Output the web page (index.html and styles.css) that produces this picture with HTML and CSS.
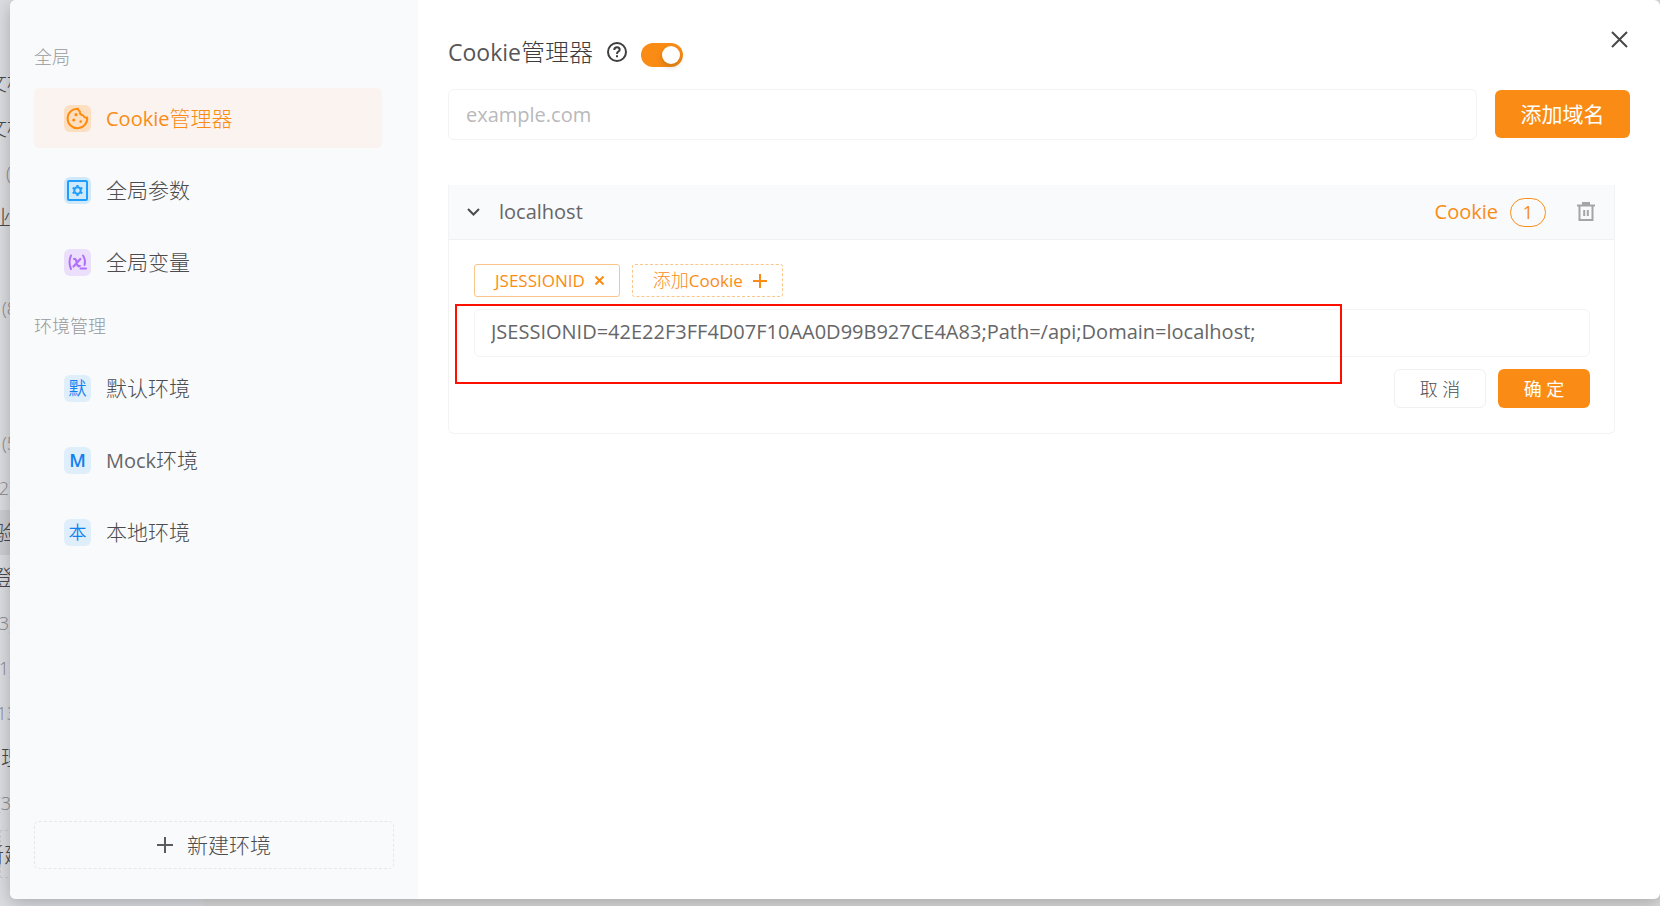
FILE: index.html
```html
<!DOCTYPE html>
<html lang="zh-CN">
<head>
<meta charset="utf-8">
<title>Cookie管理器</title>
<link rel="stylesheet" href="styles.css">
</head>
<body>
<div class="backdrop" aria-hidden="true">
  <ul class="tree">
    <li class="end-28">文档</li>
    <li class="end-28">文档</li>
    <li class="count end-26">(3)</li>
    <li class="end-32">业务</li>
    <li></li>
    <li class="count end-22">(8)</li>
    <li></li>
    <li></li>
    <li class="count end-22">(5)</li>
    <li class="count end-14">(2)</li>
    <li class="selected end-16">验</li>
    <li class="end-14">登</li>
    <li class="count end-14">(3)</li>
    <li class="count end-14">(1)</li>
    <li class="count end-22">(13)</li>
    <li class="end-22">管理</li>
    <li class="count end-16">(3)</li>
  </ul>
  <div class="tree-add end-26">新建</div>
</div>

<div class="modal" role="dialog" aria-labelledby="title">
  <aside class="sidebar">
    <h2 class="group-title">全局</h2>
    <nav class="menu">
      <a class="menu-item active" href="#cookie">
        <span class="badge badge-orange">
          <svg width="27" height="27" viewBox="0 0 27 27" fill="none" stroke="#ff8c0f" stroke-width="2">
            <path d="M14 3.7A9.8 9.8 0 1 0 23.2 12.6Q20.6 13.4 19.4 10.6Q15.2 9.6 15.9 6.4Q14 5.6 14 3.7Z" stroke-linejoin="round"/>
            <g fill="#ff8c0f" stroke="none"><circle cx="12" cy="9.7" r="1.6"/><circle cx="9.8" cy="15" r="1.6"/><circle cx="16.7" cy="16.6" r="1.3"/></g>
          </svg>
        </span>
        <span><span class="latin">Cookie</span>管理器</span>
      </a>
      <a class="menu-item" href="#params">
        <span class="badge badge-sky">
          <svg width="27" height="27" viewBox="0 0 27 27" fill="none" stroke="#1e9fff">
            <rect x="4" y="4" width="19" height="19" rx="1" stroke-width="2"/>
            <circle cx="13.5" cy="13.5" r="3.2" stroke-width="2"/>
            <path d="M13.5 8v2.4M13.5 16.600v2.400M8.700 10.700l2.100 1.200M16.200 15.100l2.100 1.200M8.700 16.300l2.100-1.200M16.200 11.900l2.100-1.200" stroke-width="2.200"/>
          </svg>
        </span>
        <span>全局参数</span>
      </a>
      <a class="menu-item" href="#vars">
        <span class="badge badge-purple">
          <svg width="27" height="27" viewBox="0 0 27 27" fill="none" stroke="#b070ff" stroke-width="2" stroke-linecap="round">
            <path d="M7 6.500Q4 13 7 20M19 6.500Q22 11 20.500 16M16.500 19.500H22"/>
            <path d="M10 10Q11.700 9.500 12.300 12L13.200 15.500Q13.800 17.800 15.800 17M16.300 10L9.500 17.500" stroke-width="2.200"/>
          </svg>
        </span>
        <span>全局变量</span>
      </a>
    </nav>
    <h2 class="group-title">环境管理</h2>
    <nav class="menu">
      <a class="menu-item" href="#default"><span class="badge badge-blue">默</span><span>默认环境</span></a>
      <a class="menu-item" href="#mock"><span class="badge badge-blue badge-bold">M</span><span><span class="latin">Mock</span>环境</span></a>
      <a class="menu-item" href="#local"><span class="badge badge-blue">本</span><span>本地环境</span></a>
    </nav>
    <button class="new-env" type="button">
      <svg width="16" height="16" viewBox="0 0 16 16" stroke="#5c5c5e" stroke-width="2"><path d="M8 0v16M0 8h16"/></svg>
      新建环境
    </button>
  </aside>

  <main class="content">
    <header class="heading">
      <h1 id="title" class="title"><span class="title-latin">Cookie</span>管理器</h1>
      <svg width="20" height="20" viewBox="0 0 20 20" fill="none" stroke="#3e3e40" stroke-width="2">
        <circle cx="10" cy="10" r="9"/>
        <path d="M7.300 8Q7.300 5.300 10 5.300T12.700 7.800Q12.700 9 11.300 9.700Q10 10.400 10 12M10 13.200v2"/>
      </svg>
      <input class="switch" type="checkbox" role="switch" aria-label="启用Cookie管理器" checked>
    </header>

    <form class="domain-form">
      <input class="field domain-field" type="text" placeholder="example.com" aria-label="域名">
      <button class="primary add-domain" type="button">添加域名</button>
    </form>

    <section class="panel">
      <header class="panel-head">
        <button class="toggle latin" type="button" aria-expanded="true">
          <svg width="13" height="8" viewBox="0 0 13 8" fill="none" stroke="#4c4c4e" stroke-width="2"><path d="M1 1l5.500 5.500L12 1"/></svg>
          localhost
        </button>
        <span class="cookie-label latin">Cookie</span>
        <span class="count-pill">1</span>
        <button class="icon-button" type="button" aria-label="删除">
          <svg width="18" height="20" viewBox="0 0 18 20" fill="none" stroke="#a4a5a7" stroke-width="2">
            <path d="M0 3.500h18M2.500 3.500V18h13V3.500M7.200 8v6M10.800 8v6"/><path d="M5 1.500h8" stroke-width="3"/>
          </svg>
        </button>
      </header>
      <div class="panel-body">
        <div class="tags">
          <button class="tag" type="button"><span class="tag-latin">JSESSIONID</span>
            <svg width="9" height="9" viewBox="0 0 9 9" stroke="#fa8c16" stroke-width="2"><path d="M0.500 0.500l8 8M8.500 0.500l-8 8"/></svg>
          </button>
          <button class="tag tag-dashed" type="button"><span>添加<span class="tag-latin">Cookie</span></span>
            <svg width="14" height="14" viewBox="0 0 14 14" stroke="#fa8c16" stroke-width="2"><path d="M7 0v14M0 7h14"/></svg>
          </button>
        </div>
        <input class="field cookie-field" type="text" aria-label="Cookie" value="JSESSIONID=42E22F3FF4D07F10AA0D99B927CE4A83;Path=/api;Domain=localhost;">
        <div class="actions">
          <button class="secondary action" type="button">取 消</button>
          <button class="primary action" type="button">确 定</button>
        </div>
      </div>
      <div class="highlight"></div>
    </section>
  </main>
  <button class="close" type="button" aria-label="关闭">
    <svg width="17" height="17" viewBox="0 0 17 17" stroke="#48484a" stroke-width="2"><path d="M1 1l15 15M16 1L1 16"/></svg>
  </button>
</div>
</body>
</html>
```
FILE: styles.css
```css
* { box-sizing: border-box; }

body {
  margin: 0;
  min-height: 100vh;
  position: relative;
  overflow: hidden;
  background: #dadada;
  color: #4c4c4e;
  font: 300 21px/30px "Open Sans", "Noto Sans CJK SC", sans-serif;
}

button, input { margin: 0; font: inherit; color: inherit; }
button { padding: 0; border: 0; background: none; cursor: pointer; white-space: nowrap; }
svg { display: block; flex: none; }
h1, h2 { margin: 0; font-weight: 300; }

.latin { color: #666668; font-size: 20px; font-weight: 400; }

/* Page behind the dialog */
.backdrop {
  position: absolute;
  inset: 0 auto 0 0;
  width: 204px;
  padding-top: 60px;
  overflow: hidden;
  background: #dcdde1;
  color: #48494c;
}
.tree { margin: 0; padding: 0; list-style: none; }
.tree li {
  display: flex;
  justify-content: flex-end;
  align-items: center;
  height: 45px;
  padding-bottom: 2px;
  white-space: nowrap;
}
.tree .count { padding-bottom: 0; color: #88898d; font-size: 18px; }
.tree .selected { background: #cdced2; }
.tree-add {
  display: flex;
  height: 48px;
  margin-top: 5px;
  align-items: center;
  justify-content: flex-end;
  border: 1px dashed #cacbcf;
  white-space: nowrap;
}
.end-14 { padding-right: 190px; }
.end-16 { padding-right: 188px; }
.end-22 { padding-right: 182px; }
.end-26 { padding-right: 178px; }
.end-28 { padding-right: 176px; }
.end-32 { padding-right: 172px; }

/* Dialog */
.modal {
  position: relative;
  display: flex;
  min-height: calc(100vh - 7px);
  margin-left: 10px;
  border-radius: 6px;
  overflow: hidden;
  background: #fff;
  box-shadow: 0 4px 18px rgba(0, 0, 0, 0.24);
}
.close { position: absolute; top: 31px; right: 32px; }

.sidebar {
  display: flex;
  flex: none;
  flex-direction: column;
  width: 408px;
  padding: 45px 24px 30px;
  background: #f9fafc;
}
.group-title {
  margin-bottom: 19px;
  color: #98999b;
  font-size: 18px;
  line-height: 24px;
}
.menu + .group-title { margin-top: 22px; margin-bottom: 20px; }
.menu { display: flex; flex-direction: column; gap: 12px; margin-right: 12px; }
.menu-item {
  display: flex;
  align-items: center;
  gap: 15px;
  height: 60px;
  padding-left: 30px;
  border-radius: 5px;
  color: inherit;
  text-decoration: none;
}
.active, .active .latin { color: #fa8c16; }
.active { background: #faf3ef; }
.badge {
  display: flex;
  flex: none;
  align-items: center;
  justify-content: center;
  width: 27px;
  height: 27px;
  border-radius: 6px;
  font-size: 18px;
}
.badge-orange { background: #fcdfc0; }
.badge-sky { background: #cfe9fb; }
.badge-purple { background: #ecdffb; }
.badge-blue { background: #dfeefb; color: #1280f0; font-weight: 350; }
.badge-bold { font-weight: 600; }
.new-env {
  display: flex;
  align-items: center;
  justify-content: center;
  gap: 14px;
  height: 48px;
  margin-top: auto;
  border: 1px dashed #e6e7e9;
  border-radius: 5px;
}

.content { flex: 1; min-width: 0; padding: 35px 30px; }
.heading { display: flex; align-items: center; gap: 14px; height: 34px; }
.title { color: #3c3c3e; font-size: 24px; line-height: 34px; }
.title-latin { color: #565658; font-size: 23px; font-weight: 400; }
.switch {
  display: flex;
  align-items: center;
  appearance: none;
  width: 42px;
  height: 24px;
  margin-top: 6px;
  padding: 3px;
  border-radius: 12px;
  background: #fa8c16;
}
.switch::before {
  content: "";
  width: 18px;
  height: 18px;
  margin-left: auto;
  border-radius: 50%;
  background: #fff;
  box-shadow: 0 3px 6px rgba(0, 35, 11, 0.2);
}

.field {
  min-width: 0;
  border: 1px solid #f3f3f4;
  border-radius: 6px;
  background: #fff;
  color: #666668;
  font-size: 20px;
  font-weight: 400;
  outline: 0;
}
.field::placeholder { color: #b9b9bb; opacity: 1; }
.domain-form { display: flex; gap: 18px; margin-top: 20px; }
.domain-field { flex: 1; height: 51px; padding: 0 17px; }
.primary { border-radius: 6px; background: #fa8c16; color: #fff; font-weight: 400; }
.secondary { border: 1px solid #f0f0f1; border-radius: 6px; background: #fff; }
.add-domain { width: 135px; height: 48px; margin-top: 1px; }

.panel {
  position: relative;
  margin: 45px 15px 0 0;
  border: 1px solid #f3f3f4;
  border-top: 0;
  border-radius: 0 0 6px 6px;
}
.panel-head {
  display: flex;
  align-items: center;
  height: 55px;
  padding: 0 19px 0 18px;
  border-bottom: 1px solid #f1f1f3;
  background: #f9fafc;
}
.toggle { display: flex; align-items: center; gap: 19px; margin-right: auto; }
.cookie-label { margin-right: 12px; color: #fa8c16; }
.count-pill {
  width: 36px;
  height: 29px;
  margin-right: 31px;
  border: 1px solid #fa8c16;
  border-radius: 15px;
  color: #fa8c16;
  font-size: 18px;
  font-weight: 400;
  line-height: 27px;
  text-align: center;
}
.panel-body { padding: 24px 24px 25px 25px; }
.tags { display: flex; gap: 12px; }
.tag {
  display: flex;
  align-items: center;
  gap: 10px;
  height: 33px;
  padding: 0 15px 0 20px;
  border: 1px solid #fcc58a;
  border-radius: 3px;
  color: #fa8c16;
  font-size: 18px;
}
.tag-latin { font-size: 17px; font-weight: 400; }
.tag-dashed { border-style: dashed; }
.cookie-field { display: block; width: 100%; height: 48px; margin-top: 12px; padding: 0 16px 4px; }
.actions { display: flex; justify-content: flex-end; gap: 12px; margin-top: 12px; }
.action { width: 92px; height: 39px; font-size: 18px; }

.highlight {
  position: absolute;
  top: 119px;
  left: 6px;
  right: 272px;
  height: 80px;
  border: 2px solid #ff0f00;
  pointer-events: none;
}
```
